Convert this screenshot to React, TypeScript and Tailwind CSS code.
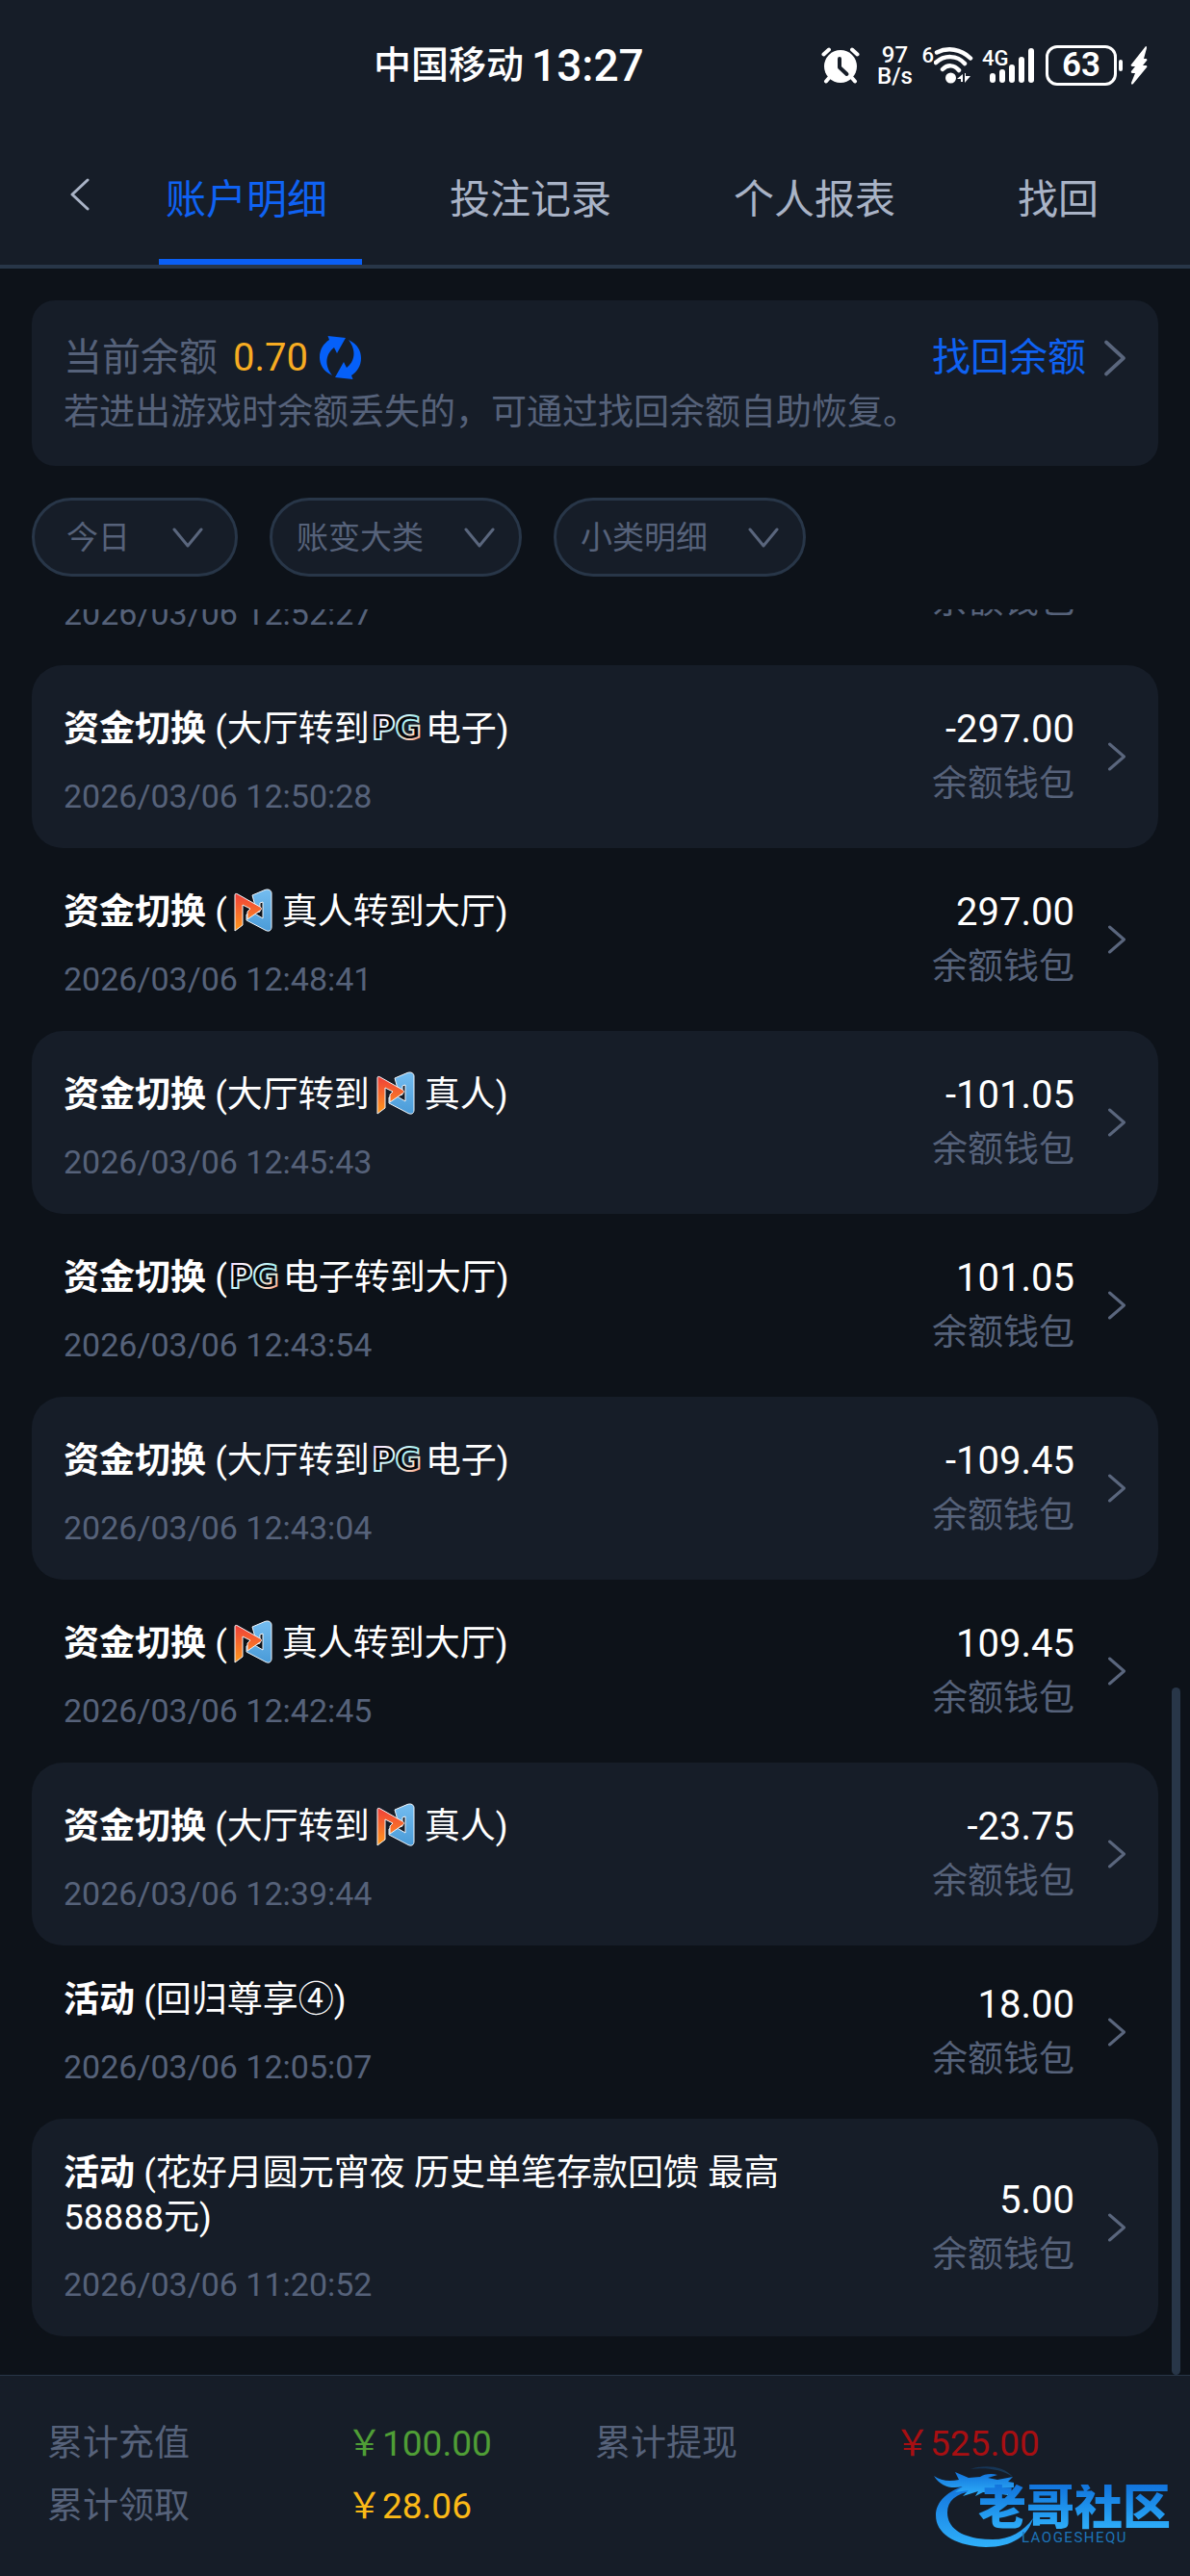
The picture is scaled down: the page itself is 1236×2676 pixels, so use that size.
import { useState } from 'react';

const tabs = ['账户明细', '投注记录', '个人报表', '找回'];

type Brand = 'pg' | 'n';

interface Entry {
  kind: string;
  before: string;
  brand?: Brand;
  after?: string;
  time: string;
  amount: string;
}

const entries: Entry[] = [
  { kind: '资金切换', before: '(', brand: 'pg', after: '电子转到大厅)', time: '2026/03/06 12:52:27', amount: '297.00' },
  { kind: '资金切换', before: '(大厅转到', brand: 'pg', after: '电子)', time: '2026/03/06 12:50:28', amount: '-297.00' },
  { kind: '资金切换', before: '(', brand: 'n', after: '真人转到大厅)', time: '2026/03/06 12:48:41', amount: '297.00' },
  { kind: '资金切换', before: '(大厅转到', brand: 'n', after: '真人)', time: '2026/03/06 12:45:43', amount: '-101.05' },
  { kind: '资金切换', before: '(', brand: 'pg', after: '电子转到大厅)', time: '2026/03/06 12:43:54', amount: '101.05' },
  { kind: '资金切换', before: '(大厅转到', brand: 'pg', after: '电子)', time: '2026/03/06 12:43:04', amount: '-109.45' },
  { kind: '资金切换', before: '(', brand: 'n', after: '真人转到大厅)', time: '2026/03/06 12:42:45', amount: '109.45' },
  { kind: '资金切换', before: '(大厅转到', brand: 'n', after: '真人)', time: '2026/03/06 12:39:44', amount: '-23.75' },
  { kind: '活动', before: '(回归尊享④)', time: '2026/03/06 12:05:07', amount: '18.00' },
  { kind: '活动', before: '(花好月圆元宵夜 历史单笔存款回馈 最高58888元)', time: '2026/03/06 11:20:52', amount: '5.00' },
];

const filters = [
  { id: 'day', label: '今日', box: 'w-[214px]', field: 'pl-[33px]', arrow: 'right-[36px]' },
  { id: 'type', label: '账变大类', box: 'w-[262px]', field: 'pl-[25px]', arrow: 'right-[28px]' },
  { id: 'subtype', label: '小类明细', box: 'w-[262px]', field: 'pl-[25px]', arrow: 'right-[28px]' },
];

const totals = [
  { label: '累计充值', value: '￥100.00', color: 'text-[#4f9e36]' },
  { label: '累计提现', value: '￥525.00', color: 'text-[#a80f12]' },
  { label: '累计领取', value: '￥28.06', color: 'text-[#fbb917]' },
];

function AlarmIcon() {
  return (
    <svg width="40" height="38" viewBox="0 0 40 38" fill="none" strokeLinecap="round">
      <circle cx="20" cy="20" r="17" fill="#fff" />
      <path d="M2.500 7.500 8 2.500M32 2.500l5.500 5M8 32l-3 3.500M32 32l3 3.500" stroke="#fff" strokeWidth="4" />
      <path d="M19 12v9l7.500 7" stroke="#161d28" strokeWidth="4" strokeLinejoin="round" />
    </svg>
  );
}

function WifiIcon() {
  return (
    <svg width="42" height="40" viewBox="0 0 42 40" fill="none" stroke="#fff" strokeWidth="4.500" strokeLinecap="round">
      <path d="M3 6.500C14 1 28 2.500 38 12.500M2 17c9-8 22-8 30 1M9 24c5-5 12-5 17 1" />
      <circle cx="17.500" cy="33" r="5.500" fill="#fff" stroke="none" />
      <path d="m24 34 6-5v8h-2v-3zM32 28l1 0v3h5l-6 7z" fill="#fff" stroke="none" />
    </svg>
  );
}

function SignalIcon() {
  return (
    <svg className="overflow-visible" width="58" height="40" viewBox="0 0 58 40" fill="#fff">
      <text x="0" y="20" className="text-[22px] font-medium">4G</text>
      <rect x="8" y="28" width="6" height="10" rx="3" />
      <rect x="18" y="24" width="6" height="14" rx="3" />
      <rect x="28" y="19" width="6" height="19" rx="3" />
      <rect x="38" y="11" width="6" height="27" rx="3" />
      <rect x="48" y="2" width="6" height="36" rx="3" />
    </svg>
  );
}

function BoltIcon() {
  return (
    <svg width="18" height="40" viewBox="0 0 18 40" fill="#fff">
      <path d="M16 0 1 19c-1 1 0 2 1 2h3l-4 5c-.5 1 0 2 1 2h3L1 38c0 2 1 2 2 1l14-17c1-1 0-2-1-2h-3l4-5c1-1 0-2-1-2h-2l3-11c0-2-1-3-2-2z" />
    </svg>
  );
}

function RefreshIcon() {
  return (
    <svg width="43" height="45" viewBox="0 0 43 45" fill="#0560f9">
      <path id="half" d="M8.500 0 27 2 18 18l-3-6C7 18 4 29 13 41 3 36 0 29 0 22 0 14 4 8 10 4z" />
      <use href="#half" transform="rotate(180 21.500 22.500)" />
    </svg>
  );
}

function ChevronRight({ big = false }: { big?: boolean }) {
  return (
    <svg width={big ? 24 : 20} height={big ? 38 : 30} viewBox="0 0 20 30" preserveAspectRatio="none" fill="none" stroke="#5a667d" strokeWidth="3" strokeLinecap="round" strokeLinejoin="round">
      <path d="m2.500 2 15 13-15 13" />
    </svg>
  );
}

function BrandIcon({ brand }: { brand: Brand }) {
  if (brand === 'pg') {
    return (
      <svg className="-mt-4 -mb-2 inline-block align-middle" width="58" height="46" viewBox="0 0 58 46">
        <defs>
          <linearGradient id="pgEdge" x1="0" y1="0" x2="1" y2="1">
            <stop offset="0" stopColor="#e9c9ff" />
            <stop offset=".3" stopColor="#ffffff" />
            <stop offset=".55" stopColor="#9ff0f4" />
            <stop offset=".75" stopColor="#ffd9c4" />
            <stop offset="1" stopColor="#f0795a" />
          </linearGradient>
        </defs>
        <text x="28" y="35" textAnchor="middle" className="font-['DejaVu_Sans'] text-[33px] font-bold" fill="#05060a" stroke="url(#pgEdge)" strokeWidth="2">PG</text>
      </svg>
    );
  }
  return (
    <svg className="-mt-4 -mb-2 inline-block align-middle" width="57" height="46" viewBox="0 0 57 46">
      <defs>
        <linearGradient id="nWarm" x1="0" y1="0" x2="0" y2="1">
          <stop offset="0" stopColor="#ef3f3a" />
          <stop offset="1" stopColor="#ff9a1c" />
        </linearGradient>
        <linearGradient id="nCool" x1="0" y1="0" x2="0" y2="1">
          <stop offset="0" stopColor="#74bdf0" />
          <stop offset="1" stopColor="#4a9bd8" />
        </linearGradient>
      </defs>
      <g stroke="#f3f6fa" strokeWidth="1" strokeLinejoin="round">
        <path d="M26 7 39 1.500c4-1.500 7 .5 7 3.500v35c0 4-3 5-6 3.500L20 33v-6l5-3 12 7V14l-3 1v9l-3 1z" fill="url(#nCool)" />
        <path d="M8 7c0-2 1-2 3-1l23 13c2 1 2 3 0 4L21 32v-8l3-3-8-4v21l-8 6z" fill="url(#nWarm)" />
      </g>
    </svg>
  );
}

function DragonLogo() {
  return (
    <svg width="106" height="86" viewBox="0 0 106 86">
      <defs>
        <linearGradient id="dragon" x1="0" y1="0" x2="0" y2="1">
          <stop offset="0" stopColor="#1273dc" />
          <stop offset="1" stopColor="#2fb0fa" />
        </linearGradient>
      </defs>
      <g fill="url(#dragon)">
        <path d="M36 20C14 26 2 38 2 52c0 20 22 32 52 33 28 0 44-12 49-30-10 14-24 22-42 22C34 77 14 68 14 49c0-12 9-20 26-22z" />
        <path d="M0 11c7 5 16 6 26 4l-4-8 14 6 12-1c4-3 12-4 18-2l-10 3 10 2 16-3-5 5 6 1v5l-12 1 8 3-2 4-14-2-12-1-8 4 3-5-16 5 6-6-14 2 8-6c-12 3-23 0-30-11z" />
        <path d="M38 4c14-5 34-4 44 8C70 4 54 2 38 4z" opacity=".25" />
      </g>
    </svg>
  );
}

function EntryRow({ entry, shaded }: { entry: Entry; shaded: boolean }) {
  return (
    <li className={`flex shrink-0 items-center gap-[34px] rounded-[32px] px-[33px] ${shaded ? 'bg-[#161d28]' : ''}`}>
      <div className="flex flex-1 items-center gap-24">
        <div className={`flex-1 pb-[34px] ${entry.brand ? 'pt-[44px]' : 'pt-[34px]'}`}>
          <p className="text-[37px] leading-[46px] text-white">
            <b className="font-bold">{entry.kind}</b> {entry.before}
            {entry.brand && <BrandIcon brand={entry.brand} />}
            {entry.after}
          </p>
          <time className="mt-[26px] block text-[34px] leading-[40px] text-[#56627a]">{entry.time}</time>
        </div>
        <div className="text-right leading-[57px]">
          <p className="text-[40px] text-white">{entry.amount}</p>
          <p className="text-[37px] text-[#56627a]">余额钱包</p>
        </div>
      </div>
      <a href="#detail" aria-label="详情">
        <ChevronRight />
      </a>
    </li>
  );
}

export default function App() {
  const [tab, setTab] = useState(0);

  return (
    <div className="flex h-screen flex-col bg-[#0d1219] font-[Roboto,'Noto_Sans_CJK_SC',sans-serif]">
      <header className="border-b-4 border-[#283648] bg-[#161d28]">
        <div className="flex h-[136px] items-center pl-[388px] pr-[44px] text-white">
          <span className="text-[39px] font-medium">中国移动</span>
          <span className="ml-2 text-[46px] font-medium">13:27</span>
          <div className="ml-auto flex items-center font-semibold">
            <AlarmIcon />
            <div className="ml-4 w-[40px] text-center text-[24px] font-medium leading-[22px]">
              97<br />B/s
            </div>
            <span className="ml-2 self-start text-[22px] font-medium leading-[24px]">6</span>
            <WifiIcon />
            <div className="ml-2">
              <SignalIcon />
            </div>
            <div className="ml-2 flex h-[42px] w-[74px] items-center justify-center rounded-[12px] border-[3px] border-white text-[35px]">63</div>
            <div className="ml-0.5 h-3 w-1 rounded-full bg-white" />
            <div className="ml-2">
              <BoltIcon />
            </div>
          </div>
        </div>
        <nav className="flex h-[139px] items-stretch">
          <button className="flex w-[165px] items-center justify-center pb-2" aria-label="返回">
            <svg width="22" height="34" viewBox="0 0 22 34" fill="none" stroke="#a9b3c6" strokeWidth="3" strokeLinecap="round" strokeLinejoin="round">
              <path d="M19 2 3 17l16 15" />
            </svg>
          </button>
          {tabs.map((name, i) => (
            <button
              key={name}
              onClick={() => setTab(i)}
              className={`relative flex w-[295px] items-center px-[7px] pt-1 text-[42px] last:w-auto ${i === tab ? 'text-[#0f62f3]' : 'text-[#a9b3c6]'}`}
            >
              {name}
              {i === tab && <span className="absolute bottom-0 left-0 h-1.5 w-[211px] bg-[#0a5ff5]" />}
            </button>
          ))}
        </nav>
      </header>

      <section className="mx-[33px] mt-[33px] h-[172px] rounded-[24px] bg-[#161d28] px-[33px] pt-[31px] text-[#56627a]">
        <div className="flex items-center text-[40px] leading-[57px]">
          <span>当前余额</span>
          <span className="ml-4 text-[#f7ac22]">0.70</span>
          <button className="ml-3" aria-label="刷新">
            <RefreshIcon />
          </button>
          <a href="#recover" className="ml-auto flex items-center gap-[18px] text-[#0f62f3]">
            找回余额
            <ChevronRight big />
          </a>
        </div>
        <p className="text-[37px] leading-[57px]">若进出游戏时余额丢失的，可通过找回余额自助恢复。</p>
      </section>

      <div className="mt-[33px] flex gap-[33px] px-[33px]">
        {filters.map((f) => (
          <div key={f.id} className={`relative h-[82px] ${f.box}`}>
            <select
              id={f.id}
              aria-label={f.label}
              className={`h-full w-full appearance-none rounded-full border-[3px] border-[#283648] bg-[#161d28] pt-0.5 text-[33px] leading-[50px] text-[#56627a] ${f.field}`}
            >
              <option>{f.label}</option>
            </select>
            <svg className={`pointer-events-none absolute top-[31px] ${f.arrow}`} width="32" height="21" viewBox="0 0 32 21" fill="none" stroke="#5a667d" strokeWidth="3" strokeLinecap="round" strokeLinejoin="round">
              <path d="m2 2 14 17L30 2" />
            </svg>
          </div>
        ))}
      </div>

      <main className="relative mt-[34px] flex min-h-0 flex-1 flex-col justify-end overflow-hidden">
        <ul className="flex flex-col px-[33px] pb-10">
          {entries.map((entry, i) => (
            <EntryRow key={entry.time} entry={entry} shaded={i % 2 === 1} />
          ))}
        </ul>
        <div className="absolute bottom-0 right-[10px] h-[714px] w-[9px] rounded-full bg-[#283648]" />
      </main>

      <footer className="relative h-[209px] border-t border-[#283648] bg-[#161d28] px-[49px] pt-[38px]">
        <dl className="grid grid-cols-2 text-[37px] leading-[65px]">
          {totals.map((t) => (
            <div key={t.label} className="flex">
              <dt className="w-[311px] text-[#56627a]">{t.label}</dt>
              <dd className={t.color}>{t.value}</dd>
            </div>
          ))}
        </dl>
        <div className="absolute bottom-[29px] right-[20px] flex">
          <DragonLogo />
          <div className="-ml-[60px] flex flex-col items-center pt-5">
            <span className="bg-gradient-to-b from-[#1273dc] to-[#2fb0fa] bg-clip-text text-[50px] font-black leading-[48px] text-transparent">老哥社区</span>
            <span className="text-[15px] leading-[14px] tracking-widest text-[#1d74b8]">LAOGESHEQU</span>
          </div>
        </div>
      </footer>
    </div>
  );
}
